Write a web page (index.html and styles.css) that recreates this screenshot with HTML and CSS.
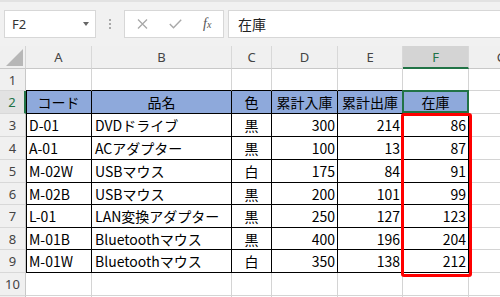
FILE: index.html
```html
<!DOCTYPE html>
<html lang="ja">
<head>
<meta charset="utf-8">
<title>在庫表</title>
<link rel="stylesheet" href="styles.css">
</head>
<body>
<div class="app">
  <div class="fbar">
    <div class="namebox"><span class="ref">F2</span><span class="dd"></span></div>
    <div class="grip"><i></i><i></i><i></i></div>
    <div class="btns">
      <svg class="ico" width="11" height="10" viewBox="0 0 11 10"><path d="M1 0.5 L10 9.5 M10 0.5 L1 9.5" stroke="#a8a8a8" stroke-width="1.3" fill="none"/></svg>
      <svg class="ico" width="13" height="10" viewBox="0 0 13 10"><path d="M0.8 5 L4.5 8.8 L12.2 0.8" stroke="#a8a8a8" stroke-width="1.4" fill="none"/></svg>
      <span class="fx"><i>f</i><i class="sub">x</i></span>
    </div>
    <div class="formula">在庫</div>
  </div>

  <div class="sheet">
    <div class="corner"><span class="tri"></span></div>
    <div class="ch">A</div><div class="ch">B</div><div class="ch">C</div><div class="ch">D</div><div class="ch">E</div><div class="ch sel">F</div><div class="ch">G</div>

    <div class="rh">1</div>
    <div class="c above"></div><div class="c above"></div><div class="c above"></div><div class="c above"></div><div class="c above"></div><div class="c above"></div><div class="c"></div>

    <div class="rh selr">2</div>
    <div class="c t hd a m">コード</div><div class="c t hd m">品名</div><div class="c t hd m">色</div><div class="c t hd m">累計入庫</div><div class="c t hd m">累計出庫</div><div class="c t hd m active">在庫</div><div class="c"></div>

    <div class="rh">3</div>
    <div class="c t a">D-01</div><div class="c t">DVDドライブ</div><div class="c t m">黒</div><div class="c t r">300</div><div class="c t r">214</div><div class="c t r">86</div><div class="c"></div>

    <div class="rh">4</div>
    <div class="c t a">A-01</div><div class="c t">ACアダプター</div><div class="c t m">黒</div><div class="c t r">100</div><div class="c t r">13</div><div class="c t r">87</div><div class="c"></div>

    <div class="rh">5</div>
    <div class="c t a">M-02W</div><div class="c t">USBマウス</div><div class="c t m">白</div><div class="c t r">175</div><div class="c t r">84</div><div class="c t r">91</div><div class="c"></div>

    <div class="rh">6</div>
    <div class="c t a">M-02B</div><div class="c t">USBマウス</div><div class="c t m">黒</div><div class="c t r">200</div><div class="c t r">101</div><div class="c t r">99</div><div class="c"></div>

    <div class="rh">7</div>
    <div class="c t a">L-01</div><div class="c t">LAN変換アダプター</div><div class="c t m">黒</div><div class="c t r">250</div><div class="c t r">127</div><div class="c t r">123</div><div class="c"></div>

    <div class="rh">8</div>
    <div class="c t a">M-01B</div><div class="c t">Bluetoothマウス</div><div class="c t m">黒</div><div class="c t r">400</div><div class="c t r">196</div><div class="c t r">204</div><div class="c"></div>

    <div class="rh">9</div>
    <div class="c t a">M-01W</div><div class="c t">Bluetoothマウス</div><div class="c t m">白</div><div class="c t r">350</div><div class="c t r">138</div><div class="c t r">212</div><div class="c"></div>

    <div class="rh">10</div>
    <div class="c"></div><div class="c"></div><div class="c"></div><div class="c"></div><div class="c"></div><div class="c"></div><div class="c"></div>

    <div class="rh"></div>
    <div class="c"></div><div class="c"></div><div class="c"></div><div class="c"></div><div class="c"></div><div class="c"></div><div class="c"></div>

    <div class="highlight"></div>
  </div>
</div>
</body>
</html>
```

FILE: styles.css
```css
* { box-sizing: border-box; }
html, body { margin: 0; padding: 0; }
body {
  width: 500px;
  height: 297px;
  overflow: hidden;
  background: #ffffff;
  font-family: "Noto Sans CJK JP", "Noto Sans", sans-serif;
}
.app { width: 500px; height: 297px; overflow: hidden; }

/* formula bar */
.fbar {
  height: 46px;
  background: #f1f1f1;
  border-top: 2px solid #e2e2e2;
  display: flex;
  align-items: flex-start;
  padding-top: 8px;
}
.namebox {
  margin-left: 4px;
  width: 92px;
  height: 28px;
  background: #fff;
  border: 1px solid #d7d7d7;
  display: flex;
  align-items: center;
  justify-content: space-between;
  padding: 0 6px 0 7px;
}
.ref {
  font-family: "Noto Sans", sans-serif;
  font-size: 13px;
  color: #333;
}
.dd {
  width: 0; height: 0;
  border-left: 3.5px solid transparent;
  border-right: 3.5px solid transparent;
  border-top: 4px solid #666;
}
.grip {
  width: 28px;
  height: 28px;
  display: flex;
  flex-direction: column;
  align-items: center;
  justify-content: center;
  gap: 2px;
}
.grip i {
  display: block;
  width: 2px; height: 2px;
  background: #a9a9a9;
}
.btns {
  width: 100px;
  height: 28px;
  background: #fff;
  border: 1px solid #d7d7d7;
  display: flex;
  align-items: center;
  padding-left: 12px;
  gap: 21px;
}
.fx {
  font-family: "Liberation Serif", "DejaVu Serif", serif;
  font-style: italic;
  color: #555;
  font-size: 14px;
}
.fx i { font-style: italic; }
.fx .sub { font-size: 10px; }
.formula {
  margin-left: 4px;
  flex: 1;
  height: 28px;
  background: #fff;
  border: 1px solid #d7d7d7;
  border-right: none;
  font-size: 14px;
  color: #222;
  display: flex;
  align-items: center;
  padding-left: 9px;
}

/* sheet grid */
.sheet {
  position: relative;
  display: grid;
  grid-template-columns: 26px 66px 140px 40px 66px 65px 66px 66px;
  grid-template-rows: 23px 22px 23px 23px 23px 23px 22px 23px 22px 23px 23px 22px;
  width: 535px;
}
.corner {
  background: #f0f0f0;
  border-right: 1px solid #d4d4d4;
  border-bottom: 1px solid #c8c8c8;
  display: flex;
  align-items: flex-end;
  justify-content: flex-end;
  padding: 0 2px 2px 0;
}
.tri {
  width: 17px; height: 17px;
  background: #b7b7b7;
  clip-path: polygon(100% 0, 100% 100%, 0 100%);
}
.ch {
  background: #f0f0f0;
  border-right: 1px solid #d8d8d8;
  border-bottom: 1px solid #c8c8c8;
  display: flex;
  align-items: center;
  justify-content: center;
  font-family: "Noto Sans", sans-serif;
  font-size: 13px;
  color: #444;
}
.ch.sel {
  background: #d4d4d4;
  color: #217346;
  border-bottom: 2px solid #217346;
}
.rh {
  background: #f0f0f0;
  border-right: 1px solid #c8c8c8;
  border-bottom: 1px solid #d8d8d8;
  display: flex;
  align-items: center;
  justify-content: center;
  font-family: "Noto Sans", sans-serif;
  font-size: 13px;
  color: #444;
}
.rh.selr {
  background: #e2e2e2;
  color: #217346;
  border-right: 2px solid #217346;
}
.c {
  background: #fff;
  border-right: 1px solid #d4d4d4;
  border-bottom: 1px solid #d4d4d4;
  display: flex;
  align-items: center;
  padding: 0 3px;
  font-size: 14px;
  color: #000;
  white-space: nowrap;
  overflow: hidden;
}
.c.above { border-bottom-color: #000; }
.c.t {
  border-right-color: #000;
  border-bottom-color: #000;
}
.c.a { box-shadow: inset 1px 0 0 #000; padding-left: 3px; }
.c.hd { background: #8ea9db; }
.c.m { justify-content: center; }
.c.r { justify-content: flex-end; padding-right: 2px; }
.c.active { position: relative; overflow: visible; }
.c.active::after {
  content: "";
  position: absolute;
  top: -1px; left: -1px; right: -1px; bottom: 0;
  border: 2px solid #217346;
}

.highlight {
  position: absolute;
  grid-column: 7 / 8;
  grid-row: 4 / 11;
  top: -1.5px; bottom: -4px; left: -2.5px; right: -2.5px;
  border: 3.5px solid #ff0000;
  border-radius: 3px;
  z-index: 2;
}
```
